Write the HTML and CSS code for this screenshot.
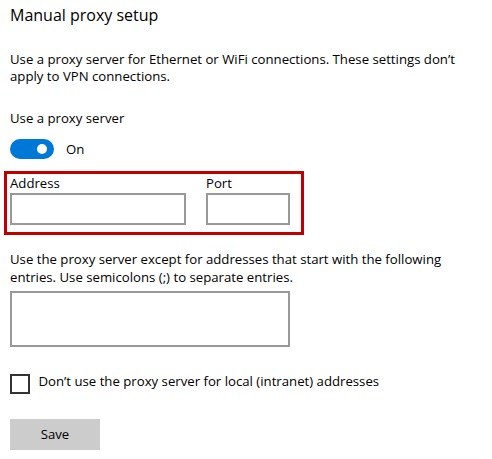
FILE: index.html
```html
<!DOCTYPE html>
<html lang="en">
<head>
<meta charset="utf-8">
<title>Manual proxy setup</title>
<link rel="stylesheet" href="styles.css">
</head>
<body>
<main class="page">
  <h1 class="title">Manual proxy setup</h1>
  <p class="desc">Use a proxy server for Ethernet or WiFi connections. These settings don’t apply to VPN connections.</p>
  <div class="label">Use a proxy server</div>
  <div class="toggle-row">
    <span class="toggle"><span class="thumb"></span></span>
    <span class="toggle-text">On</span>
  </div>
  <div class="fields">
    <div class="field field-address">
      <label class="field-label">Address</label>
      <div class="input"></div>
    </div>
    <div class="field field-port">
      <label class="field-label">Port</label>
      <div class="input"></div>
    </div>
  </div>
  <p class="desc desc-except">Use the proxy server except for addresses that start with the following entries. Use semicolons (;) to separate entries.</p>
  <div class="textarea"></div>
  <div class="check-row">
    <span class="checkbox"></span>
    <span class="check-text">Don’t use the proxy server for local (intranet) addresses</span>
  </div>
  <div class="save">Save</div>
</main>
</body>
</html>
```

FILE: styles.css
```css
* { box-sizing: border-box; }
html, body {
  margin: 0;
  background: #ffffff;
}
body {
  font-family: "Open Sans", "Noto Sans", sans-serif;
  color: #000000;
  font-size: 13.2px;
}
.page {
  padding: 2.5px 0 0 10px;
  display: flex;
  flex-direction: column;
  align-items: flex-start;
}
.title {
  margin: 0;
  font-size: 16px;
  font-weight: 400;
  line-height: 24px;
}
.desc {
  margin: 24px 0 0 0;
  width: 470px;
  line-height: 17.5px;
}
.label {
  margin-top: 24.7px;
  line-height: 17.5px;
}
.toggle-row {
  margin-top: 11.3px;
  display: flex;
  align-items: center;
  height: 20px;
}
.toggle {
  width: 44px;
  height: 20px;
  border-radius: 10px;
  background: #0078d7;
  display: flex;
  align-items: center;
  justify-content: flex-end;
  padding-right: 7px;
}
.thumb {
  width: 10px;
  height: 10px;
  border-radius: 50%;
  background: #ffffff;
}
.toggle-text {
  margin-left: 12px;
  line-height: 20px;
}
.fields {
  margin: 12px 0 0 -6px;
  width: 300px;
  height: 64px;
  border: 3px solid #c00000;
  padding: 1.5px 11px 0 3px;
  display: flex;
  gap: 20px;
}
.field {
  display: flex;
  flex-direction: column;
}
.field-address { width: 176px; }
.field-port { width: 84px; }
.field-label {
  line-height: 17.5px;
}
.input {
  height: 32px;
  border: 2px solid #999999;
  background: #ffffff;
}
.desc-except {
  margin-top: 16.2px;
}
.textarea {
  margin-top: 4.8px;
  width: 280px;
  height: 56px;
  border: 2px solid #999999;
}
.check-row {
  margin-top: 27px;
  display: flex;
  align-items: flex-start;
}
.checkbox {
  width: 20px;
  height: 20px;
  border: 2px solid #333333;
  flex: none;
}
.check-text {
  margin-left: 8.5px;
  margin-top: -1px;
  line-height: 17.5px;
}
.save {
  margin-top: 25px;
  width: 90px;
  height: 31px;
  background: #cccccc;
  display: flex;
  align-items: center;
  justify-content: center;
  line-height: 20px;
}
```
